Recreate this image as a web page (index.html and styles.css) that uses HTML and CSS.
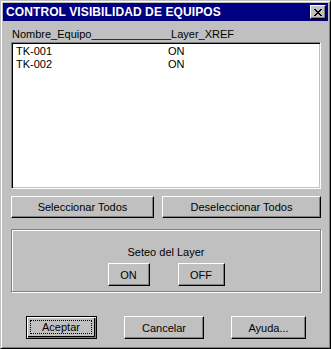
FILE: index.html
```html
<!DOCTYPE html>
<html>
<head>
<meta charset="utf-8">
<link rel="stylesheet" href="styles.css">
</head>
<body>
<div class="window">
  <div class="titlebar">
    <span class="title">CONTROL VISIBILIDAD DE EQUIPOS</span>
    <span class="close"><svg width="8" height="7" viewBox="0 0 8 7"><path d="M0 0h2v1h1v1h2v-1h1v-1h2v1h-1v1h-1v1h-1v1h1v1h1v1h1v1h-2v-1h-1v-1h-2v1h-1v1h-2v-1h1v-1h1v-1h1v-1h-1v-1h-1v-1h-1z" fill="#000"/></svg></span>
  </div>
  <div class="content">
    <div class="label">Nombre_Equipo_____________Layer_XREF</div>
    <div class="list">
      <div class="row"><span class="c1">TK-001</span><span>ON</span></div>
      <div class="row"><span class="c1">TK-002</span><span>ON</span></div>
    </div>
    <div class="sel-row">
      <button class="btn sel">Seleccionar Todos</button>
      <button class="btn desel">Deseleccionar Todos</button>
    </div>
    <div class="group">
      <div class="group-label">Seteo del Layer</div>
      <div class="onoff">
        <button class="btn on">ON</button>
        <button class="btn off">OFF</button>
      </div>
    </div>
    <div class="bottom">
      <button class="btn default b-acc"><span class="focus">Aceptar</span></button>
      <button class="btn b-can">Cancelar</button>
      <button class="btn b-ayu">Ayuda...</button>
    </div>
  </div>
</div>
</body>
</html>
```
FILE: styles.css
```css
html, body {
  margin: 0;
  padding: 0;
  background: #c0c0c0;
}
.window {
  width: 331px;
  height: 349px;
  box-sizing: border-box;
  background: #c0c0c0;
  border: 1px solid;
  border-color: #c0c0c0 #000 #000 #c0c0c0;
  box-shadow: inset 1px 1px #fff, inset -1px -1px #808080;
  padding: 2px;
  font-family: "Liberation Sans", Arial, sans-serif;
  font-size: 11px;
  color: #000;
}
.titlebar {
  height: 18px;
  background: #000080;
  display: flex;
  align-items: center;
  justify-content: space-between;
  padding: 0 2px 0 3px;
}
.title {
  color: #fff;
  font-weight: bold;
  font-size: 12px;
  letter-spacing: 0.1px;
}
.close {
  width: 16px;
  height: 14px;
  box-sizing: border-box;
  background: #c0c0c0;
  border: 1px solid;
  border-color: #fff #000 #000 #fff;
  box-shadow: inset -1px -1px #808080;
  display: flex;
  align-items: center;
  justify-content: center;
  padding-right: 1px;
}
.close svg { display: block; }
.content {
  padding: 0 7px 0 8px;
}
.label {
  padding: 7px 0 0 1px;
  line-height: 13px;
  height: 14px;
}
.list {
  height: 147px;
  box-sizing: border-box;
  background: #fff;
  border: 1px solid;
  border-color: #808080 #fff #fff #808080;
  box-shadow: inset 1px 1px #000, inset -1px -1px #c0c0c0;
  padding: 2px 4px;
}
.row {
  display: flex;
  line-height: 13px;
}
.c1 { width: 152px; }
.btn {
  font-family: inherit;
  font-size: 11px;
  color: #000;
  background: #c0c0c0;
  border: 1px solid;
  border-color: #fff #000 #000 #fff;
  box-shadow: inset -1px -1px #808080;
  padding: 0;
  margin: 0;
  height: 22px;
  box-sizing: border-box;
}
.sel-row {
  display: flex;
  gap: 8px;
  margin-top: 7px;
}
.sel { width: 143px; }
.desel { width: 159px; }
.group {
  margin-top: 11px;
  height: 63px;
  box-sizing: border-box;
  border: 1px solid #808080;
  box-shadow: inset 1px 1px #fff, 1px 1px #fff;
  display: flex;
  flex-direction: column;
  align-items: center;
  padding-top: 16px;
}
.group-label {
  line-height: 13px;
}
.onoff {
  display: flex;
  gap: 28px;
  margin-top: 4px;
}
.on { width: 42px; height: 23px; }
.off { width: 47px; height: 23px; }
.bottom {
  display: flex;
  margin-top: 24px;
  padding-left: 15px;
}
.bottom .btn { height: 23px; }
.b-acc { width: 71px; }
.b-can { width: 80px; margin-left: 27px; }
.b-ayu { width: 75px; margin-left: 27px; }
.default {
  border: 1px solid #000;
  box-shadow: inset 1px 1px #fff, inset -1px -1px #808080, inset -2px -2px #000;
  padding: 3px 4px 4px 3px;
  display: flex;
}
.focus {
  flex: 1;
  border: 1px dotted #000;
  display: flex;
  align-items: center;
  justify-content: center;
}
```
